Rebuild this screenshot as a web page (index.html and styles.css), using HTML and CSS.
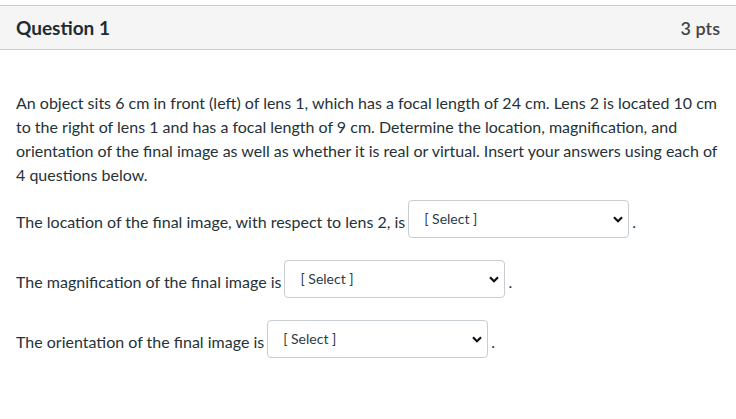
FILE: index.html
```html
<!DOCTYPE html>
<html lang="en">
<head>
    <meta charset="UTF-8">
    <meta name="viewport" content="width=device-width, initial-scale=1.0">
    <title>Question 1</title>
    <link rel="stylesheet" href="styles.css">
</head>
<body>
    <div class="question">
        <div class="question-header">
            <span class="question-name">Question 1</span>
            <span class="question-points">3 pts</span>
        </div>

        <div class="question-text">
            <p class="prompt">An object sits 6 cm in front (left) of lens 1, which has a focal length of 24 cm. Lens 2 is located 10 cm to the right of lens 1 and has a focal length of 9 cm. Determine the location, magnification, and orientation of the final image as well as whether it is real or virtual. Insert your answers using each of 4 questions below.</p>

            <p class="answer-row">The location of the final image, with respect to lens 2, is
                <select class="answer-select" name="location">
                    <option>[ Select ]</option>
                </select>.
            </p>

            <p class="answer-row">The magnification of the final image is
                <select class="answer-select" name="magnification">
                    <option>[ Select ]</option>
                </select>.
            </p>

            <p class="answer-row">The orientation of the final image is
                <select class="answer-select" name="orientation">
                    <option>[ Select ]</option>
                </select>.
            </p>
        </div>
    </div>
</body>
</html>
```

FILE: styles.css
```css
body {
    margin: 0;
    padding-top: 5px;
    font-family: Lato, "Open Sans", sans-serif;
    color: #2d3b45;
    background: #fff;
}
.question-header {
    display: flex;
    justify-content: space-between;
    align-items: center;
    height: 43px;
    padding: 0 16px;
    background-color: #f5f5f5;
    border-top: 1px solid #c7cdd1;
    border-bottom: 1px solid #c7cdd1;
}
.question-name {
    font-size: 19px;
    font-weight: bold;
    color: #1f2b33;
}
.question-points {
    font-size: 18px;
    font-weight: 600;
    color: #444;
}
.question-text {
    padding: 0 16px;
    font-size: 16px;
    line-height: 24px;
    color: #263238;
}
.prompt {
    margin: 41px 0 0;
}
/* select sits a little higher than the sentence around it */
.answer-row {
    margin: 13px 0 16px;
    display: flex;
    align-items: center;
    white-space: nowrap;
}
.answer-select {
    width: 221px;
    height: 38px;
    margin: 0 3px 6px;
    padding: 0 8px 2px 15px;
    font-family: Lato, sans-serif;
    font-size: 14px;
    color: #2d3b45;
    background-color: #fff;
    border: 1px solid #c7cdd1;
    border-radius: 4px;
    appearance: none;
    background-image: url("data:image/svg+xml;utf8,<svg xmlns='http://www.w3.org/2000/svg' width='10' height='7' viewBox='0 0 10 7'><path d='M1 1.2l4 4 4-4' fill='none' stroke='%23111' stroke-width='2.2'/></svg>");
    background-repeat: no-repeat;
    background-position: right 5px center;
}
```
